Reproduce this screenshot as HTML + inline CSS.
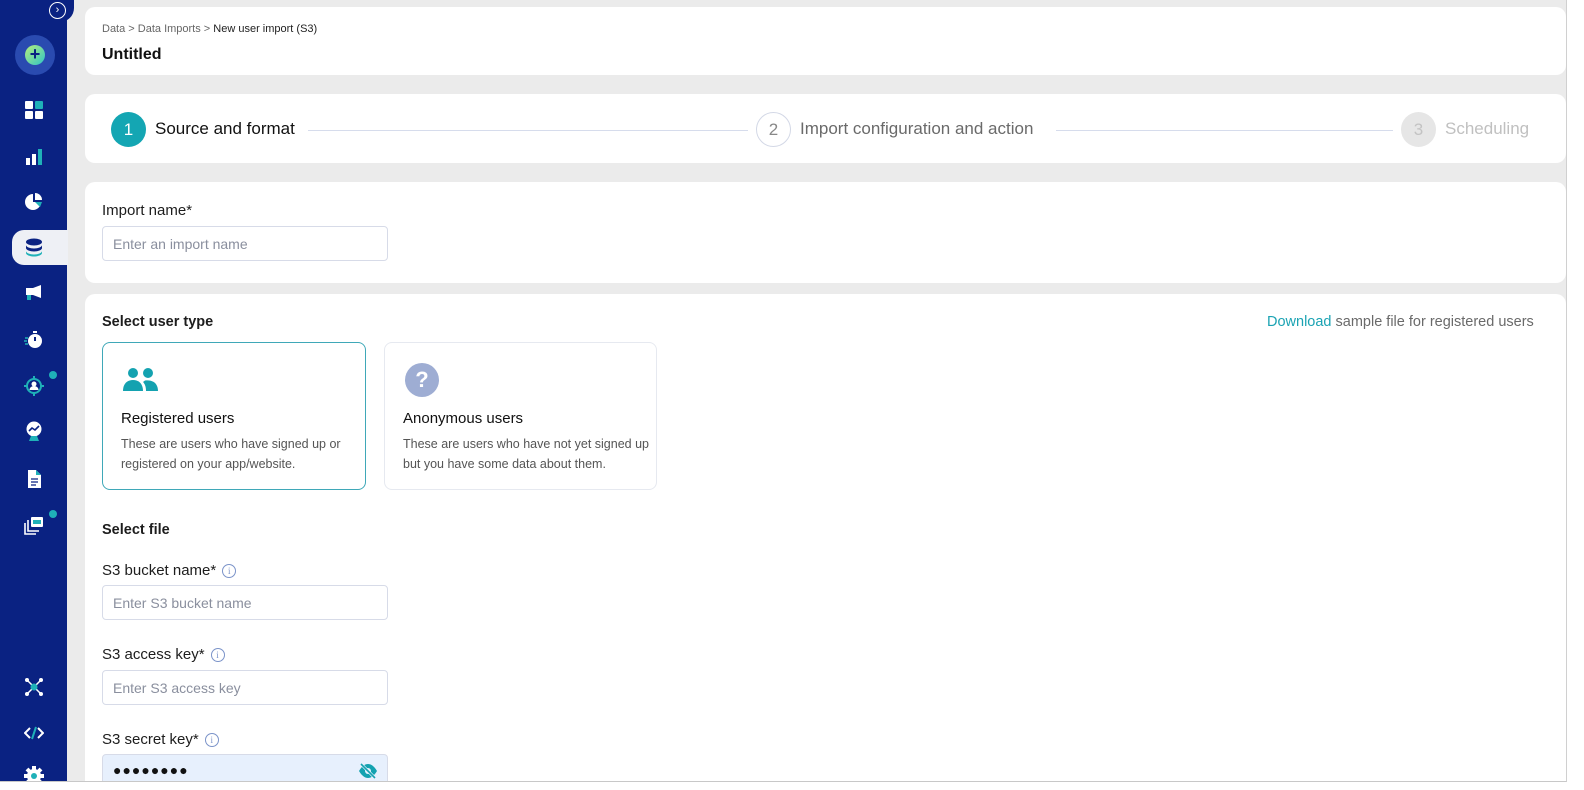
<!DOCTYPE html>
<html><head><meta charset="utf-8"><style>
*{box-sizing:border-box;margin:0;padding:0}
body{width:1584px;height:790px;overflow:hidden;background:#fff;font-family:"Liberation Sans",sans-serif;color:#1d1d1d;position:relative}
.main{position:absolute;left:0;top:0;width:1567px;height:782px;background:#ebebeb;border-right:1px solid #d0d0d0;border-bottom:1px solid #c8c8c8;overflow:hidden}
.side{position:absolute;left:0;top:0;width:67px;height:782px;background:#0a2282}
.card{position:absolute;left:85px;width:1481px;background:#fff;border-radius:10px}
.ic{position:absolute;left:24px;width:20px;height:20px}
.inp{position:absolute;left:102px;width:286px;height:35px;border:1px solid #d7dbe8;border-radius:4px;font-size:14px;color:#8a8f9e;padding:9px 10px}
.lbl{position:absolute;left:102px;font-size:15px;color:#1d1d1d}
.info{display:inline-block;width:14px;height:14px;border:1px solid #7b93c9;border-radius:50%;font-size:9px;color:#7b93c9;text-align:center;line-height:12px;margin-left:6px;vertical-align:1px;font-family:"Liberation Serif",serif}
.box{position:absolute;top:342px;width:264px;height:148px;border-radius:8px;background:#fff}
.box h4{position:absolute;left:18px;top:67px;font-weight:normal;font-size:15px;color:#111}
.box p{position:absolute;left:18px;top:91px;font-size:12.5px;line-height:20px;color:#555}
</style></head><body>
<div class="main">
<div class="side">
  <div style="position:absolute;left:46px;top:-2px;width:28px;height:24px;background:#0a2282;border-radius:0 0 14px 14px"></div>
  <div style="position:absolute;left:49px;top:2px;width:17px;height:17px;border:1.5px solid #fff;border-radius:50%;color:#fff;font-size:11px;text-align:center;line-height:14px">›</div>
  <div style="position:absolute;left:15px;top:35px;width:40px;height:40px;border-radius:50%;background:#2a4bb0"></div>
  <div style="position:absolute;left:25px;top:45px;width:20px;height:20px;border-radius:50%;background:linear-gradient(135deg,#b6f07c,#2fc4c7);color:#0a2282;font-size:18px;font-weight:bold;text-align:center;line-height:19px">+</div>
  <svg class="ic" style="top:100px" viewBox="0 0 20 20"><rect x="1" y="1" width="8" height="8" rx="1" fill="#fff"/><rect x="11" y="1" width="8" height="8" rx="1" fill="#1fb1b8"/><rect x="1" y="11" width="8" height="8" rx="1" fill="#fff"/><rect x="11" y="11" width="8" height="8" rx="1" fill="#fff"/></svg>
  <svg class="ic" style="top:147px" viewBox="0 0 20 20"><rect x="2" y="11" width="4" height="7" fill="#fff"/><rect x="8" y="7" width="4" height="11" fill="#fff"/><rect x="14" y="2" width="4" height="16" fill="#1fb1b8"/></svg>
  <svg class="ic" style="top:192px" viewBox="0 0 20 20"><path d="M9 2A8 8 0 1 0 17 10H9Z" fill="#fff"/><path d="M11 1V8h7A7 7 0 0 0 11 1Z" fill="#fff"/><path d="M11 10h7l-2 5Z" fill="#1fb1b8"/></svg>
  <div style="position:absolute;left:12px;top:230px;width:56px;height:35px;background:#eef0f5;border-radius:12px 0 0 12px"></div>
  <svg class="ic" style="top:237px" viewBox="0 0 20 20"><ellipse cx="10" cy="5" rx="8" ry="3.5" fill="#0a2282"/><path d="M2 8c0 2 4 3.5 8 3.5S18 10 18 8v3c0 2-4 3.5-8 3.5S2 13 2 11Z" fill="#0a2282"/><path d="M2 14c0 2 4 3.5 8 3.5s8-1.5 8-3.5v2c0 2-4 3.5-8 3.5S2 18 2 16Z" fill="#1fb1b8"/></svg>
  <svg class="ic" style="top:283px" viewBox="0 0 20 20"><rect x="2" y="5" width="7" height="7" fill="#fff"/><path d="M9 5l8-3v13l-8-3Z" fill="#fff"/><rect x="3" y="12" width="4" height="5" fill="#1fb1b8"/></svg>
  <svg class="ic" style="top:330px" viewBox="0 0 20 20"><circle cx="11" cy="11" r="7" fill="#fff"/><rect x="9" y="1" width="4" height="2" fill="#fff"/><path d="M11 7v4" stroke="#0a2282" stroke-width="2"/><path d="M1 8h3M0 11h3M1 14h3" stroke="#1fb1b8" stroke-width="1.5"/></svg>
  <svg class="ic" style="top:376px" viewBox="0 0 20 20"><circle cx="10" cy="10" r="7" fill="none" stroke="#1fb1b8" stroke-width="2"/><path d="M10 0v4M10 16v4M0 10h4M16 10h4" stroke="#1fb1b8" stroke-width="2"/><circle cx="10" cy="8" r="2.5" fill="#fff"/><path d="M5.5 14a4.5 4 0 0 1 9 0Z" fill="#fff"/></svg>
  <div style="position:absolute;left:49px;top:371px;width:8px;height:8px;border-radius:50%;background:#1fb1b8"></div>
  <svg class="ic" style="top:421px" viewBox="0 0 20 20"><circle cx="10" cy="8" r="7.5" fill="#fff"/><path d="M5 10l3-3 3 2 4-4" stroke="#0a2282" stroke-width="1.6" fill="none"/><path d="M5 20l2-5h6l2 5Z" fill="#1fb1b8"/></svg>
  <svg class="ic" style="top:469px" viewBox="0 0 20 20"><path d="M4 1h8l5 5v13H4Z" fill="#fff"/><path d="M12 1v5h5Z" fill="#1fb1b8"/><path d="M7 10h7M7 13h7M7 16h5" stroke="#0a2282" stroke-width="1.3"/></svg>
  <svg class="ic" style="top:515px" viewBox="0 0 20 20"><path d="M1 8v11h11M4 5v11h11" stroke="#fff" stroke-width="1.6" fill="none"/><rect x="7" y="2" width="12" height="10" rx="1" fill="#fff"/><rect x="9" y="5" width="8" height="4" fill="#1fb1b8"/></svg>
  <div style="position:absolute;left:49px;top:510px;width:8px;height:8px;border-radius:50%;background:#1fb1b8"></div>
  <svg class="ic" style="top:677px" viewBox="0 0 20 20"><path d="M3 3l14 14M17 3L3 17" stroke="#fff" stroke-width="1.5"/><circle cx="3" cy="3" r="2" fill="#fff"/><circle cx="17" cy="3" r="2" fill="#fff"/><circle cx="3" cy="17" r="2" fill="#fff"/><circle cx="17" cy="17" r="2" fill="#fff"/><circle cx="10" cy="10" r="3.5" fill="#1fb1b8"/></svg>
  <svg class="ic" style="top:723px" viewBox="0 0 20 20"><path d="M6 5l-5 5 5 5M14 5l5 5-5 5" stroke="#fff" stroke-width="2" fill="none"/><path d="M12 4l-4 12" stroke="#1fb1b8" stroke-width="2"/></svg>
  <svg class="ic" style="top:766px" viewBox="0 0 20 20"><circle cx="10" cy="10" r="7" fill="#fff"/><path d="M10 0v20M0 10h20M3 3l14 14M17 3L3 17" stroke="#fff" stroke-width="4"/><circle cx="10" cy="10" r="3" fill="#1fb1b8"/></svg>
</div>

<div class="card" style="top:7px;height:68px">
  <div style="position:absolute;left:17px;top:16px;font-size:11px;color:#666">Data &gt; Data Imports &gt; <span style="color:#222">New user import (S3)</span></div>
  <div style="position:absolute;left:17px;top:39px;font-size:16px;font-weight:bold;color:#111">Untitled</div>
</div>

<div class="card" style="top:94px;height:69px">
  <div style="position:absolute;left:26px;top:18px;width:35px;height:35px;border-radius:50%;background:#14a6b3;color:#fff;font-size:17px;text-align:center;line-height:35px">1</div>
  <div style="position:absolute;left:70px;top:25px;font-size:17px;color:#111">Source and format</div>
  <div style="position:absolute;left:223px;top:36px;width:440px;height:1px;background:#d6dcec"></div>
  <div style="position:absolute;left:671px;top:18px;width:35px;height:35px;border-radius:50%;border:1px solid #d3d8e6;color:#888;font-size:17px;text-align:center;line-height:33px">2</div>
  <div style="position:absolute;left:715px;top:25px;font-size:17px;color:#6a6a6a">Import configuration and action</div>
  <div style="position:absolute;left:971px;top:36px;width:337px;height:1px;background:#d6dcec"></div>
  <div style="position:absolute;left:1316px;top:18px;width:35px;height:35px;border-radius:50%;background:#e6e6e6;color:#c3c3c3;font-size:17px;text-align:center;line-height:35px">3</div>
  <div style="position:absolute;left:1360px;top:25px;font-size:17px;color:#c0c0c0">Scheduling</div>
</div>

<div class="card" style="top:182px;height:101px"></div>
<div class="lbl" style="top:202px">Import name*</div>
<div class="inp" style="top:226px">Enter an import name</div>

<div class="card" style="top:294px;height:500px"></div>
<div class="lbl" style="top:314px;font-weight:bold;font-size:14.5px">Select user type</div>
<div style="position:absolute;left:1267px;top:314px;font-size:14.5px;color:#6a6a6a"><span style="color:#1ba3b3">Download</span> sample file for registered users</div>
<div class="box" style="left:102px;border:1px solid #3fa8b8">
  <svg style="position:absolute;left:19px;top:24px" width="38" height="26" viewBox="0 0 38 26"><circle cx="11" cy="6" r="5" fill="#14a2b0"/><circle cx="26" cy="6" r="5" fill="#14a2b0"/><path d="M1 24c0-7 4-11 10-11s10 4 10 11Z" fill="#14a2b0"/><path d="M23 13.5c8-1 13 3 13 10.5H24c0-4-1-7-3-9Z" fill="#14a2b0"/></svg>
  <h4>Registered users</h4>
  <p>These are users who have signed up or registered on your app/website.</p>
</div>
<div class="box" style="left:384px;width:273px;border:1px solid #e6e9f0">
  <div style="position:absolute;left:20px;top:20px;width:34px;height:34px;border-radius:50%;background:#9eadd3;color:#fff;font-weight:bold;font-size:22px;text-align:center;line-height:34px">?</div>
  <h4>Anonymous users</h4>
  <p>These are users who have not yet signed up but you have some data about them.</p>
</div>
<div class="lbl" style="top:522px;font-weight:bold;font-size:14.5px">Select file</div>
<div class="lbl" style="top:562px">S3 bucket name*<span class="info">i</span></div>
<div class="inp" style="top:585px">Enter S3 bucket name</div>
<div class="lbl" style="top:646px">S3 access key*<span class="info">i</span></div>
<div class="inp" style="top:670px">Enter S3 access key</div>
<div class="lbl" style="top:731px">S3 secret key*<span class="info">i</span></div>
<div class="inp" style="top:754px;background:#e7f0fd;color:#111;font-size:14px;letter-spacing:1px;padding-top:7px">●●●●●●●●
  <svg style="position:absolute;right:9px;top:8px" width="20" height="16" viewBox="0 0 20 16"><path d="M1 8c3-5 6-7 9-7s6 2 9 7c-3 5-6 7-9 7S4 13 1 8Z" fill="#14a2b0"/><circle cx="10" cy="8" r="3" fill="#e7f0fd"/><path d="M3 1l14 14" stroke="#e7f0fd" stroke-width="3"/><path d="M3 1l14 14" stroke="#14a2b0" stroke-width="1.6"/></svg>
</div>
</div>
</body></html>
